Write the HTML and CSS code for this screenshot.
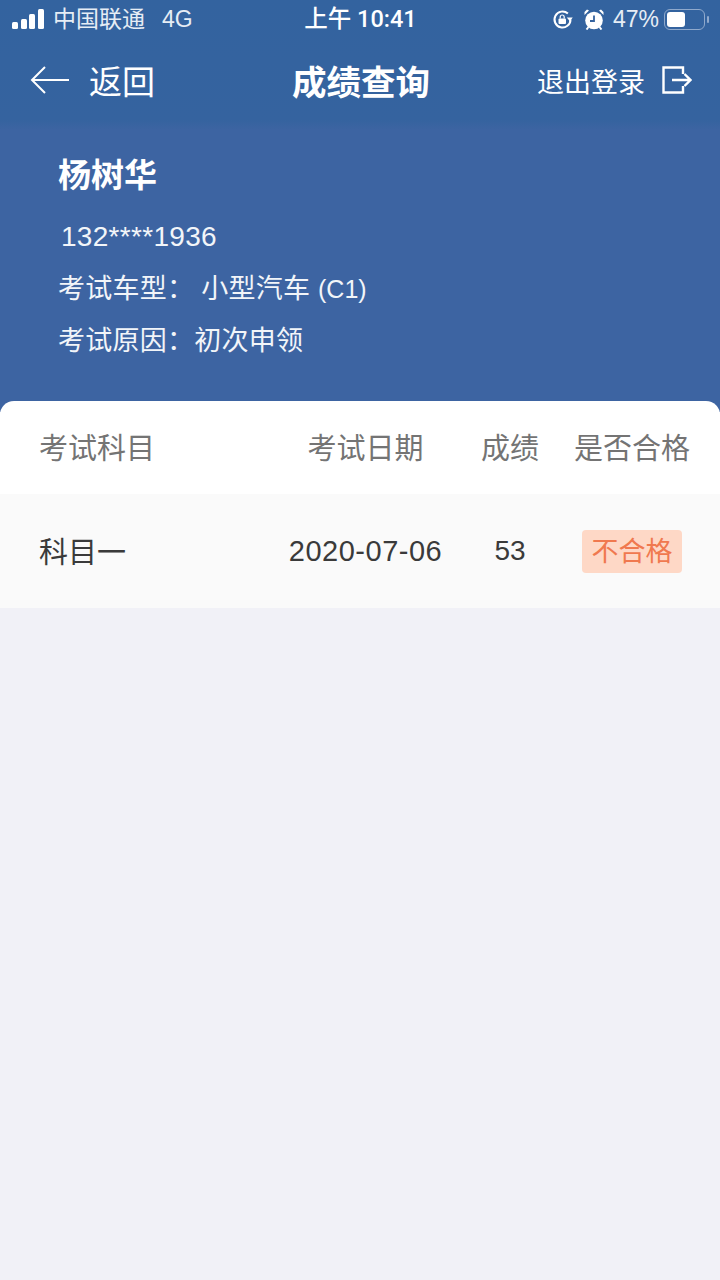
FILE: index.html
```html
<!DOCTYPE html>
<html lang="zh-CN">
<head>
<meta charset="utf-8">
<title>成绩查询</title>
<link rel="stylesheet" href="styles.css">
</head>
<body>
<div class="page">
  <header class="hero">
    <div class="status">
      <div class="status-left">
        <span class="signal"><i class="s1"></i><i class="s2"></i><i class="s3"></i><i class="s4"></i></span>
        <span class="carrier">中国联通</span>
        <span class="net">4G</span>
      </div>
      <div class="clock">上午 10:41</div>
      <div class="status-right">
        <svg class="ico-lock" width="21" height="21" viewBox="0 0 21 21" fill="none"><path d="M18.500 10.500a8 8 0 1 1-2.600-5.900" stroke="#fff" stroke-width="2"/><path d="M14.800 8.500h6l-3 3.800z" fill="#fff"/><rect x="6.500" y="9.500" width="7.500" height="5.500" rx="1" fill="#fff"/><path d="M8.200 9.500V8a2 2 0 0 1 4 0v1.500" stroke="#fff" stroke-width="1.200"/></svg>
        <svg class="ico-alarm" width="20" height="21" viewBox="0 0 20 21" fill="none"><circle cx="10" cy="11.500" r="8.800" fill="#fff"/><path d="M10 6.500v5.500H6" stroke="#35639f" stroke-width="1.800"/><path d="M.5 6 5 1.500 3 .5 .5 3zM19.500 6 15 1.500l2-1L19.500 3z" fill="#fff"/><path d="M4.500 18 2.500 20.500M15.500 18l2 2.500" stroke="#fff" stroke-width="2"/></svg>
        <span class="pct">47%</span>
        <span class="battery"><i class="fill"></i></span>
        <i class="nub"></i>
      </div>
    </div>
    <nav class="nav">
      <div class="back">
        <svg width="40" height="30" viewBox="0 0 40 30" fill="none"><path d="M15 2 2 15l13 13M2 15h37" stroke="#fff" stroke-width="2"/></svg>
        <span>返回</span>
      </div>
      <h1 class="title">成绩查询</h1>
      <div class="logout">
        <span>退出登录</span>
        <svg width="30" height="28" viewBox="0 0 30 28" fill="none"><path d="M21 8V1.500H1.500v25H21V20M10 14h18M22.500 8l6 6-6 6" stroke="#fff" stroke-width="2.400"/></svg>
      </div>
    </nav>
    <section class="profile">
      <div class="name">杨树华</div>
      <div class="phone">132****1936</div>
      <div class="line">考试车型：<span class="gap">小型汽车 <span class="latin">(C1)</span></span></div>
      <div class="line">考试原因：初次申领</div>
    </section>
  </header>
  <section class="table">
    <div class="row head">
      <span class="c-subject">考试科目</span>
      <span class="c-date">考试日期</span>
      <span class="c-score">成绩</span>
      <span class="c-pass">是否合格</span>
    </div>
    <div class="row body">
      <span class="c-subject">科目一</span>
      <span class="c-date">2020-07-06</span>
      <span class="c-score">53</span>
      <span class="c-pass"><span class="badge">不合格</span></span>
    </div>
  </section>
</div>
</body>
</html>
```
FILE: styles.css
```css
* { box-sizing: border-box; }
html, body { margin: 0; padding: 0; }
body {
  width: 720px;
  height: 1280px;
  overflow: hidden;
  background: #f1f1f7;
  font-family: "Liberation Sans", "Noto Sans CJK SC", sans-serif;
}
.page { display: flex; flex-direction: column; height: 1280px; }
.hero {
  height: 412px;
  background: linear-gradient(#33639f 0, #35639f 120px, #3d64a2 130px, #3d64a2 100%);
  color: #fff;
}
.status {
  height: 38px;
  padding: 0 11px 0 12px;
  display: grid;
  grid-template-columns: 1fr auto 1fr;
  align-items: center;
  color: #e6edf5;
}
.status-left { display: flex; align-items: center; }
.signal { display: flex; align-items: flex-end; gap: 2.5px; height: 20px; width: 32px; }
.signal i { display: block; width: 6px; background: #fff; border-radius: 1.5px; }
.s1 { height: 7px; }
.s2 { height: 10px; }
.s3 { height: 15px; }
.s4 { height: 20px; }
.carrier { margin-left: 9px; font-size: 23px; line-height: 26px; }
.net { margin-left: 17px; font-size: 23px; line-height: 26px; }
.clock { font-family: Roboto, "Noto Sans CJK SC", sans-serif; font-size: 23.5px; font-weight: 500; line-height: 26px; color: #fff; text-align: center; }
.status-right { display: flex; align-items: center; justify-content: flex-end; }
.ico-lock { margin-right: 11px; }
.ico-alarm { margin-right: 9px; }
.pct { font-size: 23px; margin-right: 5px; }
.battery {
  display: block;
  width: 41px;
  height: 21px;
  border: 1.5px solid #8fa9cc;
  border-radius: 6px;
  padding: 2px;
}
.battery .fill { display: block; width: 18px; height: 100%; background: #fff; border-radius: 3px; }
.nub { display: block; width: 2px; height: 7px; margin-left: 2px; background: #8fa9cc; border-radius: 1px; }
.nav {
  height: 84px;
  padding: 0 28px 0 30px;
  display: grid;
  grid-template-columns: 1fr auto 1fr;
  align-items: center;
}
.back { display: flex; align-items: center; gap: 19px; font-size: 33px; }
.title { margin: 0; font-size: 34.5px; font-weight: 700; }
.logout { display: flex; align-items: center; justify-content: flex-end; gap: 17px; font-size: 27px; }
.profile { padding: 31px 0 0 58px; }
.name { font-size: 33px; font-weight: 700; line-height: 46px; }
.phone { margin: 20px 0 0 3px; font-size: 28px; letter-spacing: 0.3px; line-height: 36px; color: #f2f5f9; }
.line { margin-top: 16px; font-size: 27px; letter-spacing: 0.25px; line-height: 36px; color: #f2f5f9; }
.gap { margin-left: 7px; }
.latin { font-size: 25px; letter-spacing: 0; }
.table {
  margin-top: -11px;
  position: relative;
  background: #fff;
  border-radius: 14px 14px 0 0;
  overflow: hidden;
}
.row {
  display: grid;
  grid-template-columns: 235px 183px 106px 138px;
  padding: 0 19px 0 39px;
  align-items: center;
}
.head { height: 93px; padding-bottom: 3px; font-size: 29px; color: #747474; }
.body { height: 114px; background: #fafafa; font-size: 29px; color: #3a3a3a; }
.body .c-subject { padding-bottom: 2px; }
.c-date { text-align: center; }
.c-score { text-align: center; }
.c-pass { text-align: center; }
.body .c-date { font-size: 29px; letter-spacing: 0.5px; }
.body .c-score { font-size: 28px; }
.badge {
  display: inline-block;
  width: 100px;
  height: 43px;
  line-height: 44px;
  font-size: 27px;
  text-align: center;
  border-radius: 4px;
  color: #f0794f;
  background: #fed8c6;
}
```
